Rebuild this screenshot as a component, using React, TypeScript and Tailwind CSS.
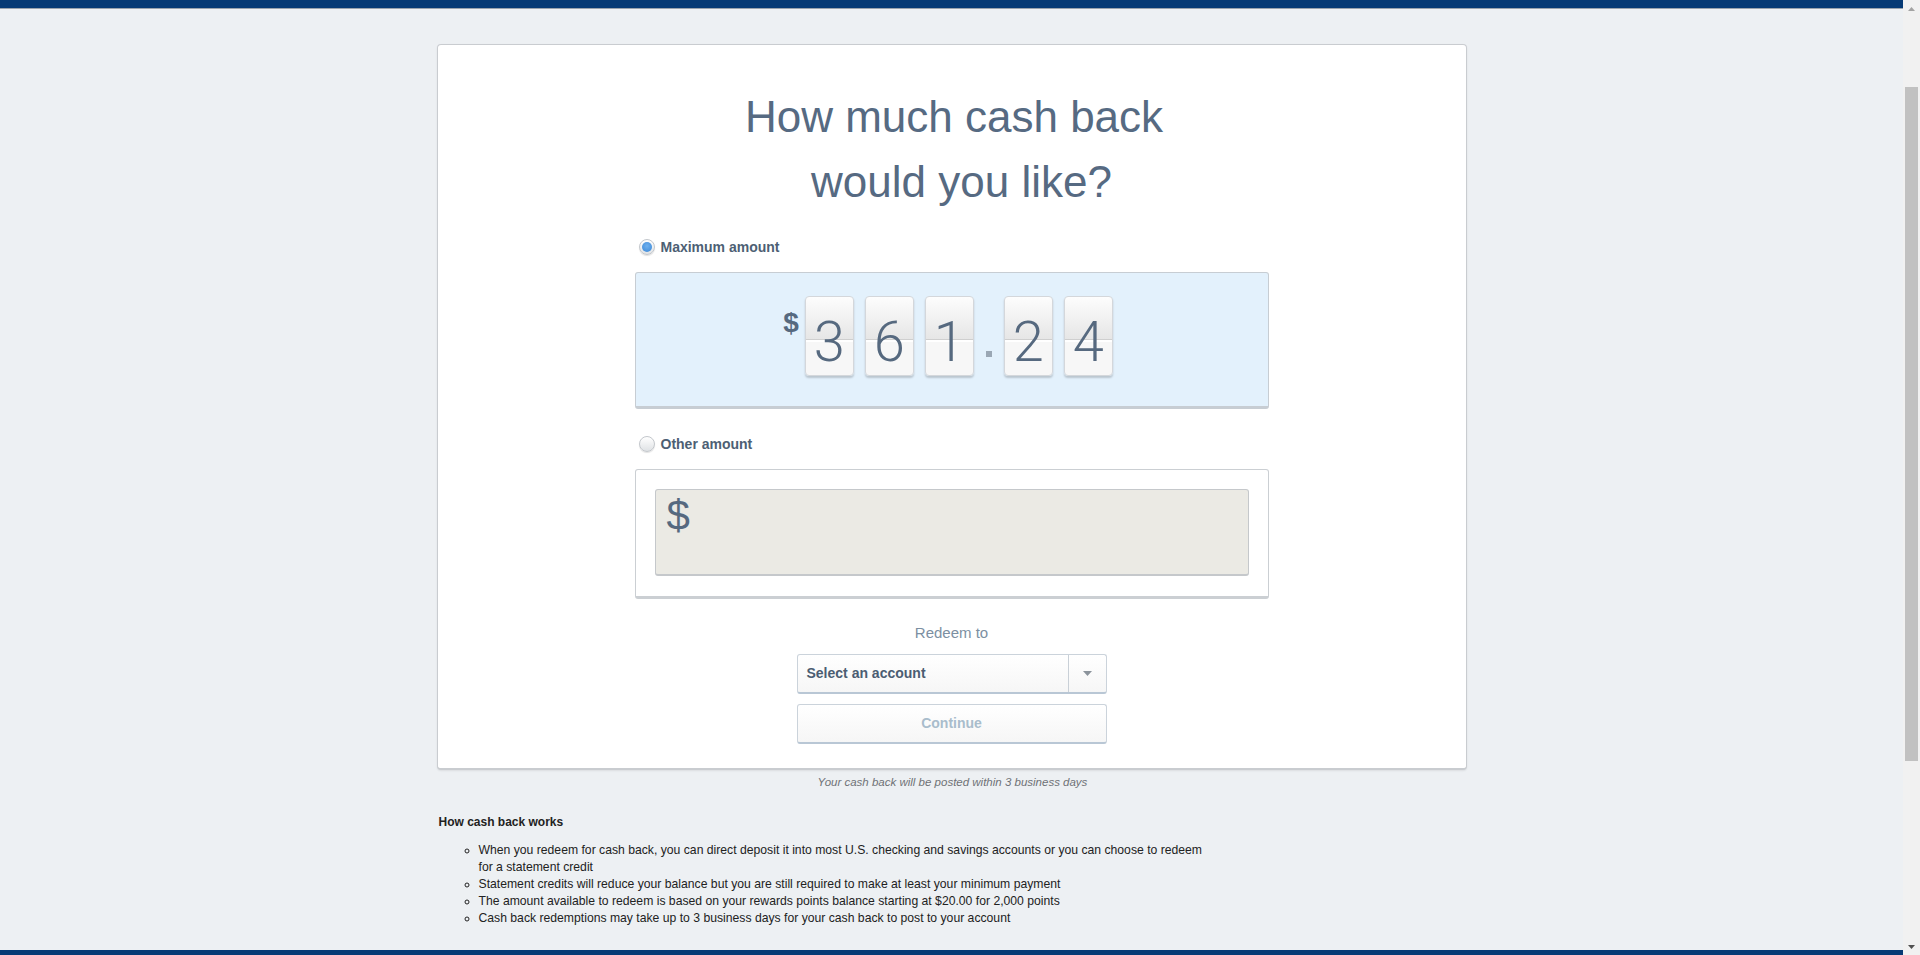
import React from "react";

function Radio({ checked }: { checked: boolean }) {
  return (
    <span className="inline-flex h-[16px] w-[16px] shrink-0 items-center justify-center rounded-full border border-[#c3c7cc] bg-[linear-gradient(to_bottom,#ffffff,#dfe2e5)] shadow-[0_1px_1px_rgba(0,0,0,0.12)]">
      {checked && (
        <span className="h-[10px] w-[10px] rounded-full bg-[radial-gradient(circle_at_50%_40%,#6eb0ee,#3a86d6)]" />
      )}
    </span>
  );
}

function Tile({ d }: { d: string }) {
  return (
    <div className="h-[80px] w-[49px] rounded-[4px] border border-[#d4d7db] bg-[linear-gradient(to_bottom,#fdfdfd_0px,#e6e6e6_42px,#cfcfcf_42px,#cfcfcf_43px,#ffffff_43px,#ffffff_45px,#f7f7f7_45px,#f7f7f7_100%)] text-center font-['Roboto',sans-serif] text-[56px] font-light leading-[90px] text-[#56697f] shadow-[0_2px_2px_rgba(0,0,0,0.18)]">
      {d}
    </div>
  );
}

export default function App() {
  const items = [
    "When you redeem for cash back, you can direct deposit it into most U.S. checking and savings accounts or you can choose to redeem for a statement credit",
    "Statement credits will reduce your balance but you are still required to make at least your minimum payment",
    "The amount available to redeem is based on your rewards points balance starting at $20.00 for 2,000 points",
    "Cash back redemptions may take up to 3 business days for your cash back to post to your account",
  ];
  return (
    <div className="flex h-[955px] w-full overflow-hidden bg-[#edf0f3] font-['Liberation_Sans',Arial,sans-serif]">
      <div className="flex min-w-0 flex-1 flex-col">
        <div className="h-[9px] shrink-0 border-b border-[#9aa3ad] bg-[#063a75]" />

        {/* Card */}
        <div className="mx-auto mt-[35px] w-[1030px] shrink-0 rounded-[4px] border border-b-2 border-[#c9ccd0] bg-white pb-[24px] pt-[39px] shadow-[0_1px_2px_rgba(0,0,0,0.08)]">
          <h1 className="pl-[5px] text-center text-[44px] font-normal leading-[65px] text-[#566a82]">
            How much cash back
            <br />
            <span className="inline-block pl-[15px]">would you like?</span>
          </h1>

          <div className="mx-auto w-[634px]">
            <div className="mt-[23px] flex h-[20px] items-center gap-[6px] pl-[4px]">
              <Radio checked />
              <span className="text-[14px] font-bold text-[#4d5f74]">Maximum amount</span>
            </div>

            <div className="mt-[15px] flex justify-center rounded-[3px] border border-b-[3px] border-[#c7cdd3] bg-[#e3f1fc] pb-[30px] pt-[23px]">
              <div className="flex items-start gap-[11px] pr-[7px]">
                <span className="-mr-[5px] mt-[12px] text-[28px] font-bold leading-[30px] text-[#56697f]">$</span>
                <Tile d="3" />
                <Tile d="6" />
                <Tile d="1" />
                <span className="mx-[1px] mt-[55px] h-[6px] w-[6px] bg-[#9aa7b4]" />
                <Tile d="2" />
                <Tile d="4" />
              </div>
            </div>

            <div className="mt-[25px] flex h-[20px] items-center gap-[6px] pl-[4px]">
              <Radio checked={false} />
              <span className="text-[14px] font-bold text-[#4d5f74]">Other amount</span>
            </div>

            <div className="mt-[15px] rounded-[3px] border border-b-[3px] border-[#cbcfd3] bg-white px-[19px] pb-[20px] pt-[19px]">
              <div className="h-[87px] rounded-[3px] border border-b-2 border-[#c5c8cb] bg-[#ebeae4] pl-[11px] pt-[2px]">
                <span className="text-[42px] leading-[48px] text-[#56697f]">$</span>
              </div>
            </div>

            <div className="mt-[25px] text-center text-[15px] leading-[18px] text-[#7c8fa2]">Redeem to</div>

            <div className="mx-auto mt-[12px] flex h-[40px] w-[310px] rounded-[3px] border border-b-2 border-[#cbd3db] border-b-[#b9c7d5] bg-[linear-gradient(to_bottom,#ffffff,#f6f6f6)]">
              <div className="flex flex-1 items-center pl-[9px] text-[14px] font-bold text-[#4b5d72]">Select an account</div>
              <div className="flex w-[38px] items-center justify-center border-l border-[#c9d0d7]">
                <svg width="9" height="5" viewBox="0 0 9 5">
                  <path d="M0 0h9L4.5 5z" fill="#8c949c" />
                </svg>
              </div>
            </div>

            <button className="mx-auto mt-[10px] flex h-[40px] w-[310px] items-center justify-center rounded-[3px] border border-b-2 border-[#cbd3db] border-b-[#b9c7d5] bg-[linear-gradient(to_bottom,#ffffff,#f6f6f6)] text-[14px] font-bold text-[#a9bdcc]">
              Continue
            </button>
          </div>
        </div>

        {/* Footer notes */}
        <div className="mx-auto w-[1030px] shrink-0 pl-[2px]">
          <p className="mt-[5px] text-center text-[11.5px] italic leading-[14px] text-[#6f7276]">
            Your cash back will be posted within 3 business days
          </p>
          <h2 className="mt-[25px] text-[12px] font-bold leading-[16px] text-[#222]">How cash back works</h2>
          <ul className="mt-[12px] w-[773px] list-[circle] pl-[40px] text-[12.2px] leading-[17px] text-[#222]">
            {items.map((t) => (
              <li key={t}>{t}</li>
            ))}
          </ul>
        </div>

        <div className="mt-auto h-[5px] shrink-0 bg-[#063a75]" />
      </div>

      {/* scrollbar */}
      <div className="flex w-[17px] shrink-0 flex-col bg-[#f1f1f1]">
        <div className="flex h-[17px] items-center justify-center">
          <svg width="7" height="4" viewBox="0 0 7 4">
            <path d="M0 4h7L3.5 0z" fill="#a3a3a3" />
          </svg>
        </div>
        <div className="flex-1 px-[2px]">
          <div className="mt-[70px] h-[674px] bg-[#c1c1c1]" />
        </div>
        <div className="flex h-[17px] items-center justify-center">
          <svg width="7" height="4" viewBox="0 0 7 4">
            <path d="M0 0h7L3.5 4z" fill="#505050" />
          </svg>
        </div>
      </div>
    </div>
  );
}
